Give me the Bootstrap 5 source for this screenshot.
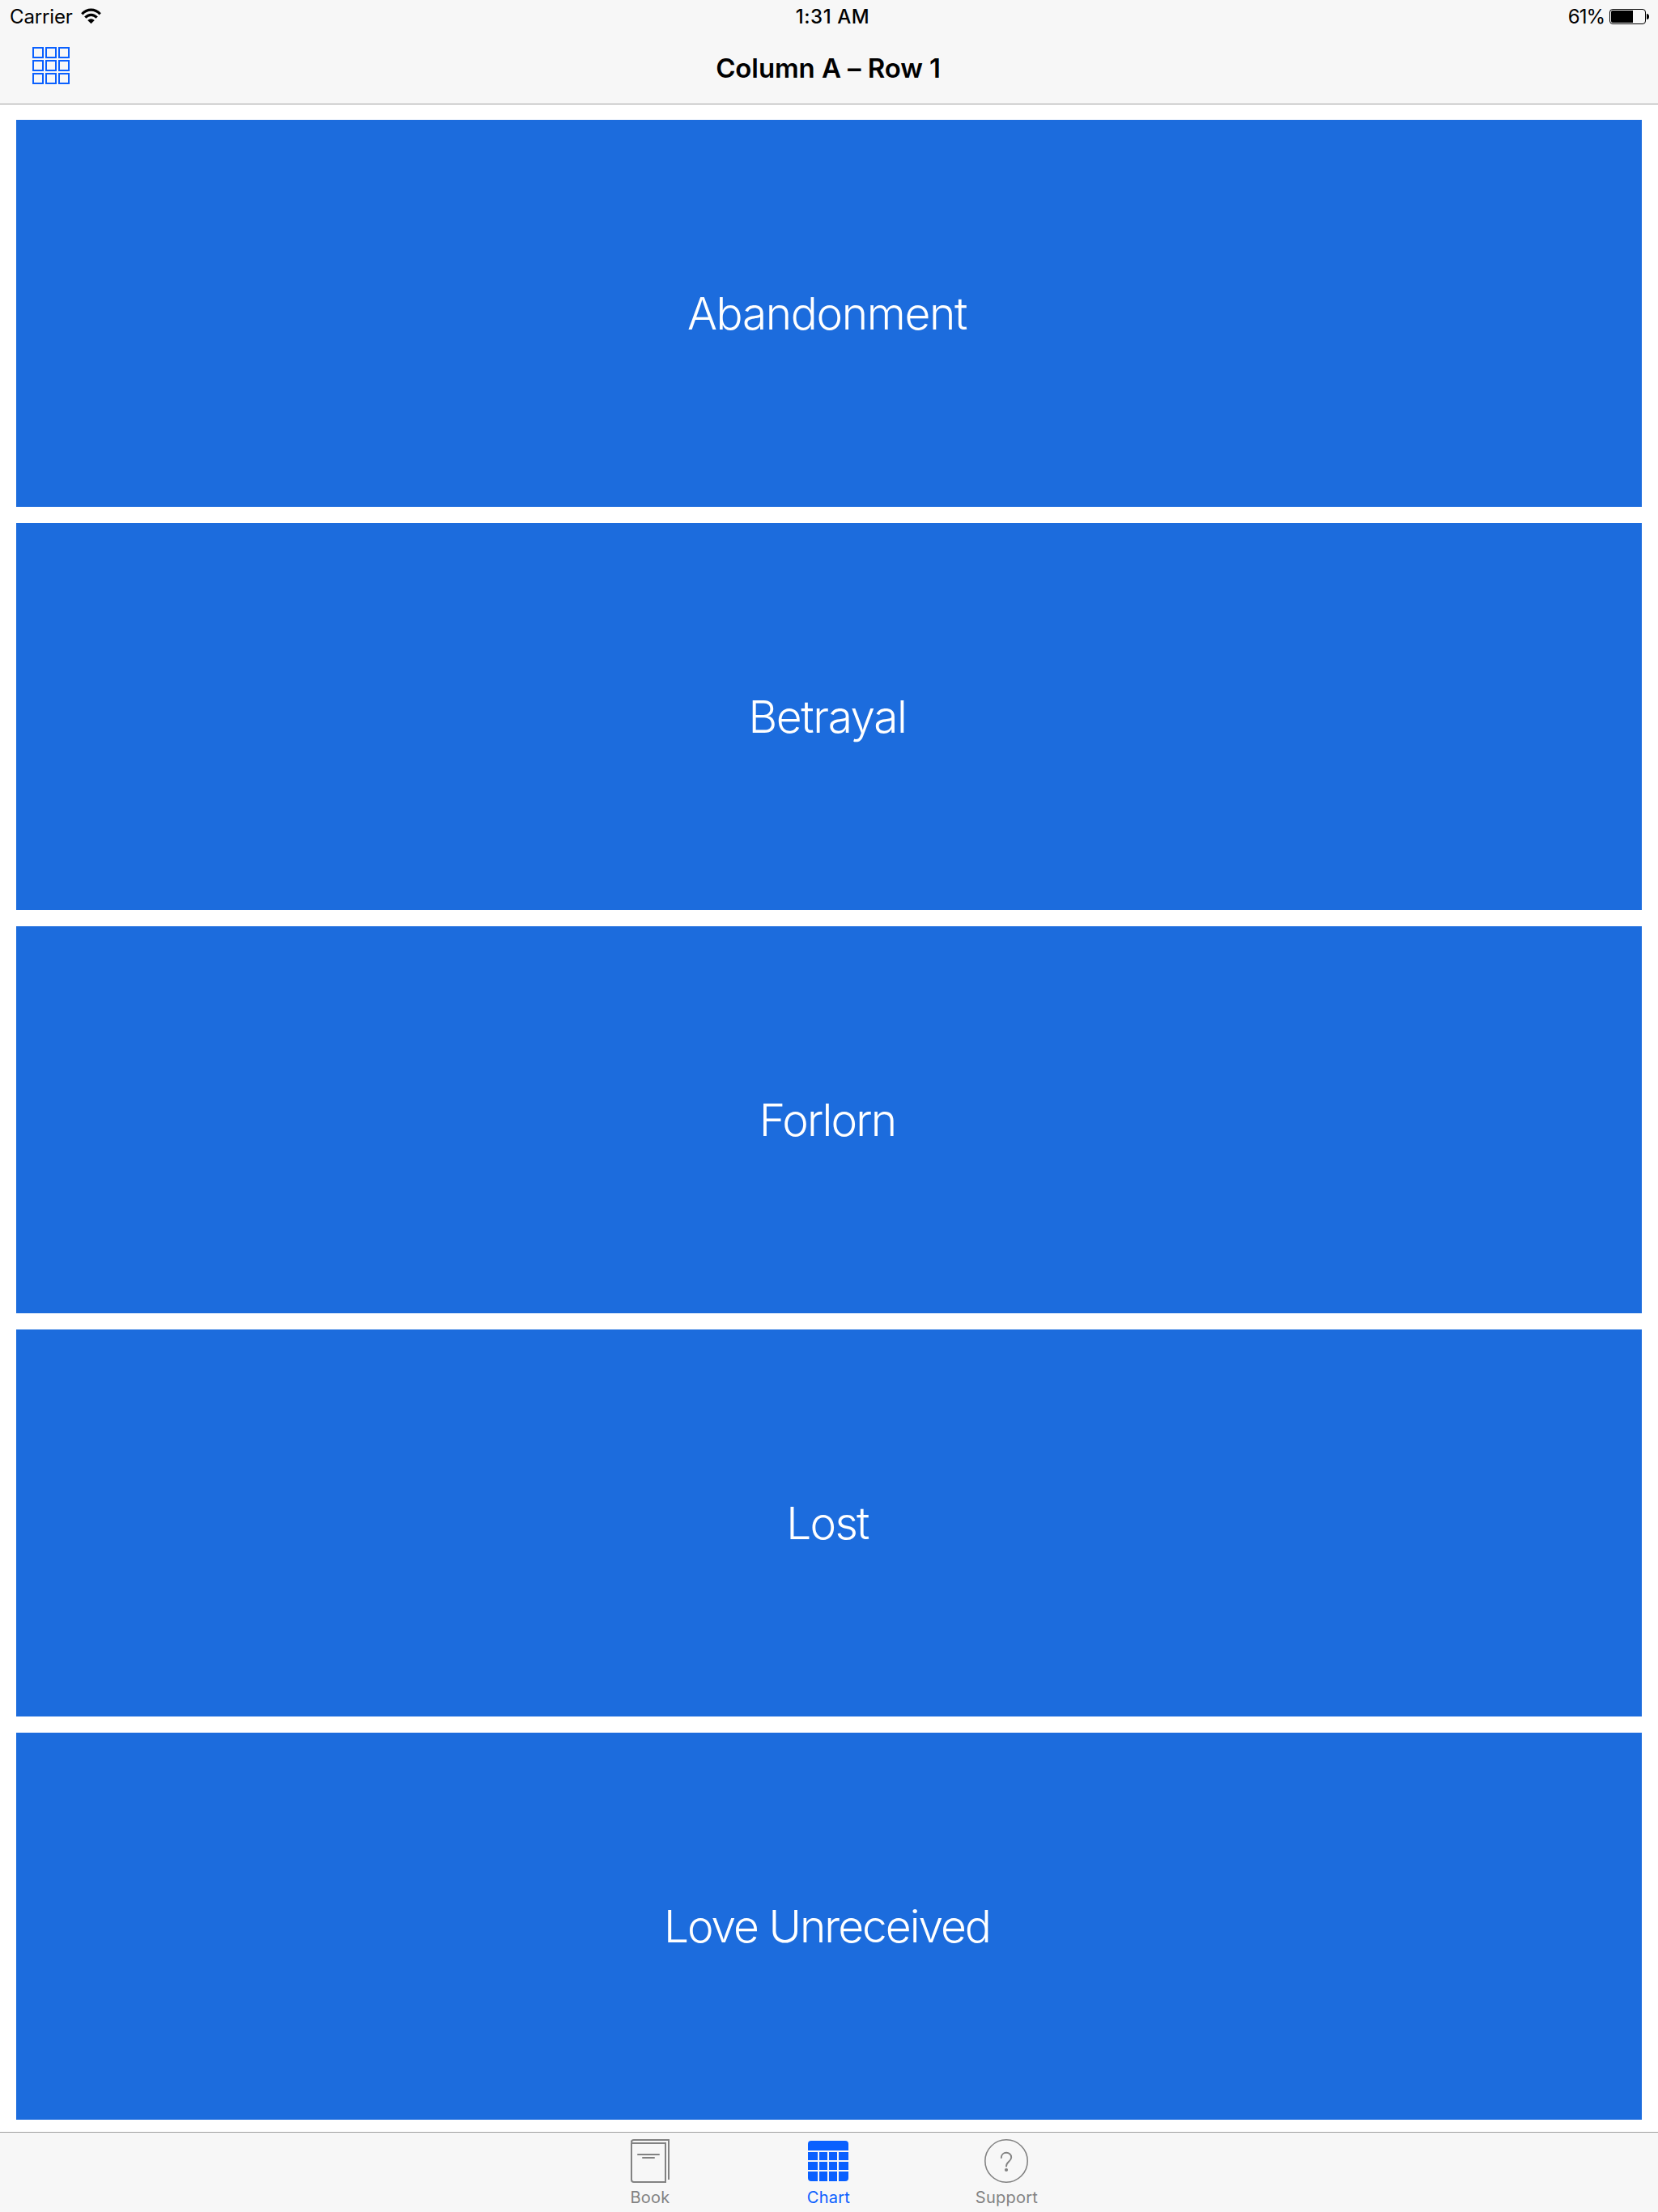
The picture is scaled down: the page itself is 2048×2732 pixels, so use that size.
<!DOCTYPE html>
<html lang="en">
<head>
<meta charset="utf-8">
<meta name="viewport" content="width=device-width, initial-scale=1">
<title>Column A – Row 1</title>
<link href="https://cdn.jsdelivr.net/npm/bootstrap@5.3.0/dist/css/bootstrap.min.css" rel="stylesheet">
<style>
  body { font-family: Inter, "Liberation Sans", sans-serif; color: #000; background: #fff; }
  svg { display: block; flex: none; }
  .app-header { height: 129px; background: #f7f7f7; border-bottom: 1px solid #a0a0a0; }
  .status-bar { height: 40px; font-size: 24px; line-height: 40px; padding: 0 11px 0 12px; }
  .status-bar > div { flex: 1 1 0; }
  .status-bar span { padding-top: 2px; }
  .clock { font-weight: 500; letter-spacing: .55px; padding-left: 8px; }
  .carrier { letter-spacing: -.15px; }
  .percent { letter-spacing: -1px; margin-right: 5px; }
  .title-bar { height: 88px; padding: 0 42px 0 40px; }
  .title-bar > div { flex: 1 1 0; }
  .title-bar h1 { font-size: 33px; font-weight: 600; letter-spacing: -.1px; line-height: 40px; }
  .grid-btn { margin-bottom: 6px; }
  .tiles { padding: 19px 20px 15px; gap: 20px; }
  .tile { background: #1c6cdd; font-size: 55px; font-weight: 300; line-height: 66px; padding-right: 4px; }
  .t1 { letter-spacing: -1.35px; padding-right: 1px; }
  .t2 { letter-spacing: -1.4px; }
  .t3 { letter-spacing: -1.85px; }
  .t4 { letter-spacing: -1.7px; }
  .t5 { letter-spacing: -2px; padding-right: 1px; }
  .tab-bar { height: 99px; background: #f7f7f7; border-top: 1px solid #a0a0a0; padding-right: 2px; }
  .tab-bar .nav-link { width: 220px; color: #828282; padding: 8px 0 0; font-size: 20px; line-height: 24px; letter-spacing: .25px; }
  .tab-bar .nav-link.active { color: #0a60ff; }
  .tab-bar span { margin-top: 6px; padding-left: 1px; }
</style>
<script src="https://cdn.jsdelivr.net/npm/bootstrap@5.3.0/dist/js/bootstrap.bundle.min.js"></script>
</head>
<body class="d-flex flex-column vh-100 overflow-hidden">
<header class="app-header flex-shrink-0">
  <div class="status-bar d-flex align-items-center">
    <div class="d-flex align-items-center">
      <span class="carrier">Carrier</span>
      <svg class="ms-2" width="30" height="40" viewBox="98 0 30 40" fill="none" stroke="#000">
        <path d="M101.3 17.3C107.6 10.5 117.4 10.5 123.7 17.3" stroke-width="3.2"/>
        <path d="M105.3 21.6C109.6 17.2 115.4 17.2 119.7 21.6" stroke-width="3.2"/>
        <path d="M108.2 24.9Q112.5 21.4 116.8 24.9L112.5 29.2Z" fill="#000" stroke="none"/>
      </svg>
    </div>
    <div class="clock d-flex justify-content-center"><span>1:31 AM</span></div>
    <div class="d-flex align-items-center justify-content-end">
      <span class="percent">61%</span>
      <svg width="50" height="40" viewBox="1987 0 50 40">
        <rect x="1988.5" y="11.5" width="44" height="18" rx="3.5" fill="none" stroke="#000"/>
        <path d="M1992 13H2017V28H1992Q1990 28 1990 26V15Q1990 13 1992 13Z"/>
        <path d="M2034 17Q2037 17 2037 20.5Q2037 24 2034 24Z"/>
      </svg>
    </div>
  </div>
  <div class="title-bar d-flex align-items-center">
    <div class="d-flex">
      <a href="#" class="grid-btn d-block" aria-label="All cells">
        <svg width="46" height="46" viewBox="0 0 46 46" fill="none" stroke="#0a60ff" stroke-width="2">
          <path d="M1 1h12v12H1zM17 1h12v12H17zM33 1h12v12H33zM1 17h12v12H1zM17 17h12v12H17zM33 17h12v12H33zM1 33h12v12H1zM17 33h12v12H17zM33 33h12v12H33z"/>
        </svg>
      </a>
    </div>
    <h1 class="m-0">Column A – Row 1</h1>
    <div></div>
  </div>
</header>
<main class="tiles d-flex flex-column flex-grow-1">
  <a href="#" class="tile d-flex flex-fill align-items-center justify-content-center text-white text-decoration-none"><span class="t1">Abandonment</span></a>
  <a href="#" class="tile d-flex flex-fill align-items-center justify-content-center text-white text-decoration-none"><span class="t2">Betrayal</span></a>
  <a href="#" class="tile d-flex flex-fill align-items-center justify-content-center text-white text-decoration-none"><span class="t3">Forlorn</span></a>
  <a href="#" class="tile d-flex flex-fill align-items-center justify-content-center text-white text-decoration-none"><span class="t4">Lost</span></a>
  <a href="#" class="tile d-flex flex-fill align-items-center justify-content-center text-white text-decoration-none"><span class="t5">Love Unreceived</span></a>
</main>
<nav class="tab-bar nav d-flex justify-content-center flex-shrink-0">
  <a href="#" class="nav-link d-flex flex-column align-items-center">
    <svg width="48" height="54" viewBox="0 0 48 54" fill="none" stroke="#828282" stroke-width="2">
      <path d="M1 5V50Q1 53 4 53H43V5H3.5Q1 5 1 3.5Q1 1 4 1H47V50"/>
      <path d="M9 19H35M15 23H29" stroke-linecap="round"/>
    </svg>
    <span class="ps-0">Book</span>
  </a>
  <a href="#" class="nav-link active d-flex flex-column align-items-center">
    <svg width="50" height="54" viewBox="0 -2 50 54" fill="#0a60ff">
      <path d="M0 12V4Q0 0 4 0H46Q50 0 50 4V12Z"/>
      <path d="M0 14h12v10H0zM14 14h10v10H14zM26 14h10v10H26zM38 14h12v10H38zM0 26h12v10H0zM14 26h10v10H14zM26 26h10v10H26zM38 26h12v10H38zM14 38h10v12H14zM26 38h10v12H26z"/>
      <path d="M0 38H12V50H4Q0 50 0 46ZM38 38H50V46Q50 50 46 50H38Z"/>
    </svg>
    <span>Chart</span>
  </a>
  <a href="#" class="nav-link d-flex flex-column align-items-center">
    <svg width="54" height="54" viewBox="0 0 54 54" fill="none" stroke="#828282">
      <circle cx="27" cy="27" r="26.2" stroke-width="1.6"/>
      <path d="M20.8 23C20.8 14.800 33.200 14.800 33.200 22.500C33.200 27.500 27 27.500 27 33.600" stroke-width="1.900" stroke-linecap="round"/>
      <circle cx="27" cy="38" r="2.100" fill="#828282" stroke="none"/>
    </svg>
    <span>Support</span>
  </a>
</nav>
</body>
</html>
